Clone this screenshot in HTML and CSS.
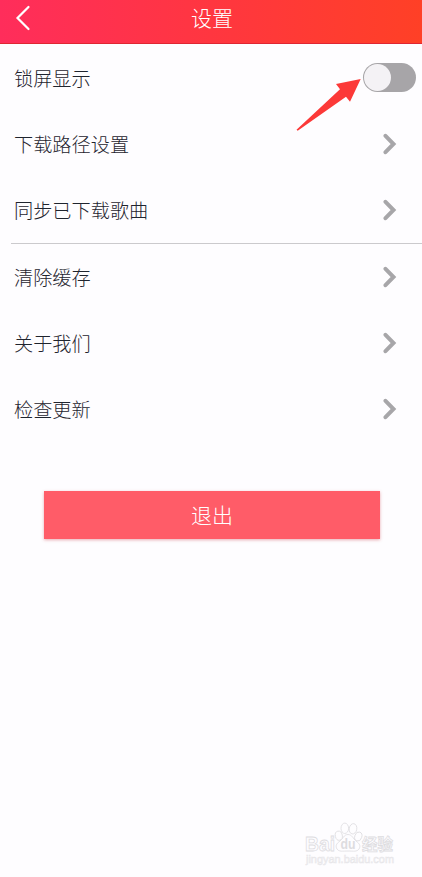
FILE: index.html
```html
<!DOCTYPE html>
<html lang="zh-CN">
<head>
  <meta charset="UTF-8">
  <meta name="viewport" content="width=device-width, initial-scale=1.0">
  <title>设置</title>
  <link rel="stylesheet" href="styles.css">
</head>
<body>
<div class="page-container">
  <!-- Header -->
  <header class="header">
    <a href="#" class="back" aria-label="返回">
      <svg width="16" height="26" viewBox="0 0 16 26"><path d="M13.500 2L2.500 13l11 11"/></svg>
    </a>
    <h1 class="title">设置</h1>
  </header>

  <!-- Settings -->
  <main class="settings">
    <div class="group">
      <div class="row">
        <span>锁屏显示</span>
        <div class="switch" role="switch" aria-checked="false"><div class="knob"></div></div>
        <svg class="pointer" width="66" height="54" viewBox="0 0 66 54"><path d="M64.7 2L40 7l4 5.3L.5 52.7l1.2 1L50 19.7l4 5z"/></svg>
      </div>
      <a href="#" class="row">
        <span>下载路径设置</span>
        <svg class="chevron" width="14" height="22" viewBox="0 0 14 22"><path d="M2.500 2.800l8 8.200-8 8.200"/></svg>
      </a>
      <a href="#" class="row">
        <span>同步已下载歌曲</span>
        <svg class="chevron" width="14" height="22" viewBox="0 0 14 22"><path d="M2.500 2.800l8 8.200-8 8.200"/></svg>
      </a>
    </div>
    <div class="group">
      <a href="#" class="row">
        <span>清除缓存</span>
        <svg class="chevron" width="14" height="22" viewBox="0 0 14 22"><path d="M2.500 2.800l8 8.200-8 8.200"/></svg>
      </a>
      <a href="#" class="row">
        <span>关于我们</span>
        <svg class="chevron" width="14" height="22" viewBox="0 0 14 22"><path d="M2.500 2.800l8 8.200-8 8.200"/></svg>
      </a>
      <a href="#" class="row">
        <span>检查更新</span>
        <svg class="chevron" width="14" height="22" viewBox="0 0 14 22"><path d="M2.500 2.800l8 8.200-8 8.200"/></svg>
      </a>
    </div>
    <button class="logout">退出</button>
  </main>

  <!-- Watermark -->
  <svg class="watermark" width="100" height="50" viewBox="0 0 100 50">
    <text class="wm-logo" x="4" y="31" textLength="30" lengthAdjust="spacingAndGlyphs">Bai</text>
    <path d="M47 14.500c-4 0-5 4-8 6.500-3.500 2.500-5 5-3 8 2 3 5.500 2 11 2s9 1 11-2c2-3 .5-5.500-3-8-3-2.500-4-6.500-8-6.500z"/>
    <ellipse cx="37.800" cy="15.700" rx="3.500" ry="4.600" transform="rotate(-12 37.800 15.700)"/>
    <ellipse cx="43.800" cy="8.300" rx="3.800" ry="5.200"/>
    <ellipse cx="52" cy="8.800" rx="3.800" ry="5.200" transform="rotate(10 52 8.800)"/>
    <ellipse cx="57.300" cy="16.500" rx="3.500" ry="4.600" transform="rotate(18 57.300 16.500)"/>
    <text class="wm-du" x="39.500" y="29" textLength="15" lengthAdjust="spacingAndGlyphs">du</text>
    <text class="wm-cn" x="61" y="30" textLength="31" lengthAdjust="spacingAndGlyphs">经验</text>
    <text class="wm-url" x="5" y="43" textLength="88" lengthAdjust="spacingAndGlyphs">jingyan.baidu.com</text>
  </svg>
</div>
</body>
</html>
```

FILE: styles.css
```css
body, html {
  margin: 0;
  padding: 0;
  font-family: "Liberation Sans", "Noto Sans CJK SC", sans-serif;
  background: #fefdff;
}

.page-container {
  height: 877px;
  position: relative;
  overflow: hidden;
}

.header {
  height: 44px;
  box-sizing: border-box;
  padding: 0 15px 6px;
  background: linear-gradient(to right, #ff2d5b, #ff3640 50%, #ff4026);
  border-bottom: 1px solid #df2633;
  display: grid;
  grid-template-columns: 16px 1fr 14px;
  align-items: center;
}

.back {
  height: 26px;
  margin-top: -2px;
}

.back path {
  fill: none;
  stroke: #fff;
  stroke-width: 2.2;
  stroke-linecap: round;
}

.title {
  margin: 0;
  font-size: 21px;
  font-weight: 300;
  line-height: 30px;
  color: #fff;
  text-align: center;
}

.settings {
  display: flex;
  flex-direction: column;
}

.group {
  margin-left: 11px;
}

.group:first-child {
  padding-top: 0.6px;
  border-bottom: 1px solid #cbcacd;
}

.row {
  height: 66.2px;
  padding: 0 25px 0 3px;
  display: flex;
  align-items: center;
  justify-content: space-between;
  position: relative;
  font-size: 19.2px;
  font-weight: 300;
  color: #1f242e;
  text-decoration: none;
}

.group:last-of-type .row {
  height: 66px;
}

.chevron path {
  fill: none;
  stroke: #a7a6a9;
  stroke-width: 4;
  stroke-linecap: round;
}

.switch {
  width: 53px;
  height: 29px;
  margin-right: -19px;
  box-sizing: border-box;
  padding: 1px;
  border-radius: 15px;
  background: #a7a5a8;
}

.knob {
  width: 27px;
  height: 27px;
  border-radius: 50%;
  background: #f4f2f5;
}

/* red arrow that points at the switch */
.pointer {
  position: absolute;
  left: 285px;
  top: 32.4px;
}

.pointer path {
  fill: #fc3938;
}

.logout {
  height: 48px;
  margin: 48.8px 42px 0 44px;
  padding: 0 0 1px;
  border: none;
  background: #ff5c68;
  box-shadow: 0 1px 3px rgba(200, 50, 60, 0.4);
  font-family: inherit;
  font-size: 21px;
  font-weight: 300;
  color: #fff;
}

.watermark {
  position: absolute;
  left: 301px;
  top: 820px;
  fill: #fefdff;
  stroke: #dddcdf;
  stroke-width: 0.8;
}

.wm-logo {
  font-size: 21px;
  font-weight: bold;
}

.wm-du {
  font-size: 14px;
  font-weight: bold;
  fill: #dddcdf;
  stroke: none;
}

.wm-cn {
  font-size: 16px;
  font-weight: bold;
}

.wm-url {
  font-size: 11px;
  fill: #f4f3f5;
  stroke: #e7e6e9;
  stroke-width: 0.5;
}
```
